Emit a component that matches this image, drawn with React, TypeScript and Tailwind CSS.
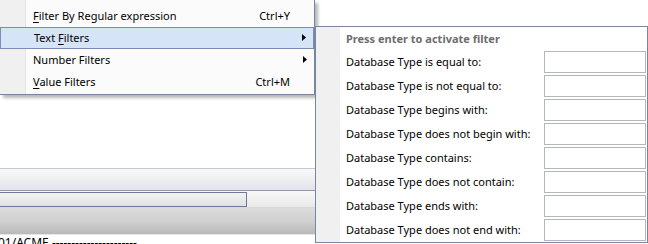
import React from "react";

const font = { fontFamily: '"Noto Sans", "Open Sans", sans-serif' };

function Arrow() {
  return (
    <svg width="4" height="7" viewBox="0 0 4 7" className="block">
      <polygon points="0,0 4,3.5 0,7" fill="#000" />
    </svg>
  );
}

function MenuItem({
  label,
  shortcut,
  sub,
  active,
}: {
  label: React.ReactNode;
  shortcut?: string;
  sub?: boolean;
  active?: boolean;
}) {
  return (
    <div
      className={
        "flex h-[22px] items-center pb-[2px] pl-[33px] " +
        (active ? "border border-[#7b8db0] bg-[#d6e4f7] pl-[32px]" : "")
      }
    >
      <span className="flex-1 whitespace-nowrap">{label}</span>
      {shortcut && <span className="whitespace-nowrap">{shortcut}</span>}
      <span className="flex w-[24px] shrink-0 items-center pl-[13px]">{sub && <Arrow />}</span>
    </div>
  );
}

const rows = [
  "Database Type is equal to:",
  "Database Type is not equal to:",
  "Database Type begins with:",
  "Database Type does not begin with:",
  "Database Type contains:",
  "Database Type does not contain:",
  "Database Type ends with:",
  "Database Type does not end with:",
];

export default function App() {
  return (
    <div
      className="relative h-[244px] w-[648px] overflow-hidden bg-white text-[11px] leading-none text-black"
      style={font}
    >
      {/* background window */}
      <div className="h-[168px] bg-white" />
      <div className="h-px bg-[#c5c8d0]" />
      <div className="h-[21px] bg-gradient-to-b from-[#f9f9f9] to-[#e1e4e9]" />
      <div className="h-px bg-[#8d97ad]" />
      <div className="flex h-[16px] bg-gradient-to-b from-[#f8f8f8] to-[#e9e9e9] pt-px">
        <div className="h-[15px] w-[247px] border border-l-0 border-[#6d7a96] bg-gradient-to-b from-[#f3f3f3] to-[#dde1e8]" />
      </div>
      <div className="h-px bg-[#d9d9d9]" />
      <div className="h-[26px] bg-gradient-to-b from-[#dcdcdc] via-[#d0d0d0] to-[#b9b9b9]" />
      <div className="h-px bg-[#e6e6e6]" />
      <div className="-ml-[2px] whitespace-nowrap pt-[2px] text-[12px]">01/ACME ----------------------</div>

      {/* main menu */}
      <div className="absolute left-0 top-0 h-[95px] w-[315px] border-b border-r border-[#7a869e] bg-[linear-gradient(to_right,#f0f0f0_25px,#e4e4e4_25px,#e4e4e4_26px,#fbfbfb_26px)] pb-px pt-[5px] shadow-[3px_3px_3px_rgba(0,0,0,0.28)]">
        <MenuItem
          label={
            <>
              <span className="underline underline-offset-2">F</span>ilter By Regular expression
            </>
          }
          shortcut="Ctrl+Y"
        />
        <MenuItem
          active
          sub
          label={
            <>
              Text <span className="underline underline-offset-2">F</span>ilters
            </>
          }
        />
        <MenuItem sub label="Number Filters" />
        <MenuItem
          label={
            <>
              <span className="underline underline-offset-2">V</span>alue Filters
            </>
          }
          shortcut="Ctrl+M"
        />
      </div>

      {/* sub menu */}
      <div className="absolute left-[315px] top-[26px] w-[333px] border border-[#7a869e] bg-[linear-gradient(to_right,#f0f0f0_24px,#ffffff_24px)] pb-px pr-px">
        <div className="flex h-[24px] items-center pb-[2px] pl-[30px] font-bold text-[#6d6d6d]">
          Press enter to activate filter
        </div>
        <div className="flex flex-col gap-[2px]">
          {rows.map((r) => (
            <div key={r} className="flex h-[22px] items-center pl-[30px]">
              <span className="flex-1 whitespace-nowrap pb-[2px]">{r}</span>
              <div className="h-[22px] w-[102px] shrink-0 border border-[#b4b6bb] bg-white" />
            </div>
          ))}
        </div>
      </div>
    </div>
  );
}
